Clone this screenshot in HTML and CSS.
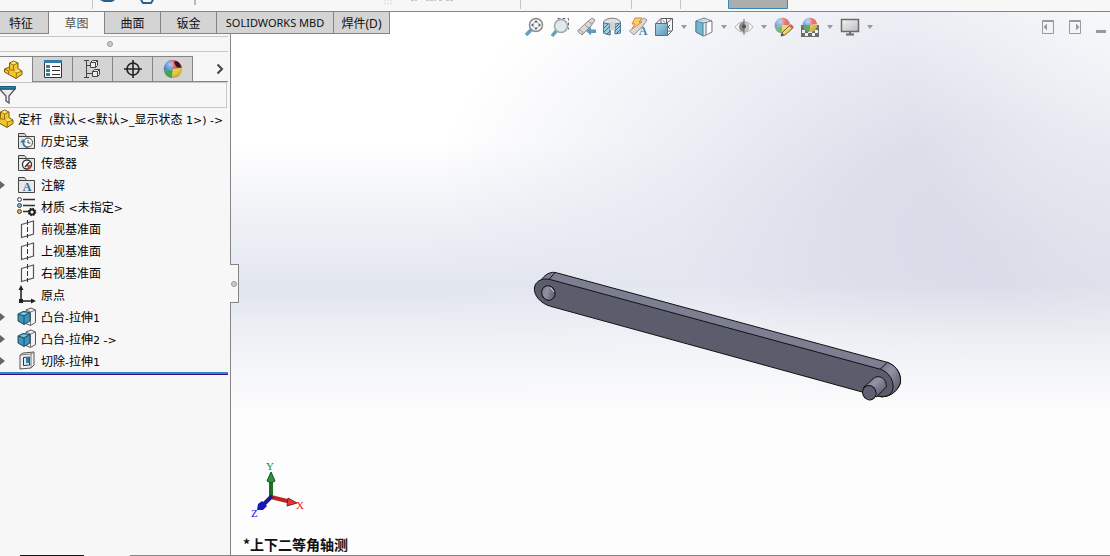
FILE: index.html
```html
<!DOCTYPE html>
<html lang="zh-CN">
<head>
  <meta charset="UTF-8" />
  <meta name="viewport" content="width=device-width, initial-scale=1" />
  <title>定杆 - SOLIDWORKS</title>
  <link rel="stylesheet" href="styles.css">
</head>
<body>
  <!-- shared icons -->
  <svg class="defs" width="0" height="0" aria-hidden="true">
    <defs>
      <linearGradient id="blue" x1="0" y1="0" x2="1" y2="1">
        <stop offset="0" stop-color="#9fd0e6" /><stop offset="1" stop-color="#3f86a8" />
      </linearGradient>
      <linearGradient id="steel" x1="0" y1="0" x2="1" y2="1">
        <stop offset="0" stop-color="#f4f4f4" /><stop offset="1" stop-color="#b4b4b4" />
      </linearGradient>
      <linearGradient id="rim" x1="0" y1="0" x2="1" y2="1">
        <stop offset="0" stop-color="#6b6d80" /><stop offset=".4" stop-color="#9092a6" /><stop offset="1" stop-color="#4c4e5c" />
      </linearGradient>
      <radialGradient id="shine" cx=".35" cy=".25" r=".8">
        <stop offset="0" stop-color="#fff" stop-opacity=".6" /><stop offset=".5" stop-color="#fff" stop-opacity="0" /><stop offset="1" stop-color="#000" stop-opacity=".25" />
      </radialGradient>
    </defs>
    <symbol id="i-part" viewBox="0 0 20 20">
      <path d="M1.500 9l5-2V3l4-2 4.500 2v5.500l4 2.500v3.500l-6 4L5 14l-3.500-2z" fill="#f3c42c" stroke="#7a5c0c" />
      <path d="M6.500 3l4 2 4.500-2M10.500 5v5l3 3 5.500-2M13.500 13l-.5 5M1.500 9l4 2v3M6.500 7v3l4 0" fill="none" stroke="#96700f" />
      <path d="M7.500 3l3-1.500 3 1.500-3 1.500zM11 11l3.500-1.500 3 1.500-3.500 1.500z" fill="#fbe27c" />
    </symbol>
    <symbol id="i-folder" viewBox="0 0 20 20">
      <path d="M1.500 17.500V2.500h6l2 3h8v12z" fill="#e9e9e9" stroke="#444" />
      <path d="M2 5.500h8" stroke="#444" />
      <path d="M2 4h5.500" stroke="#c4c4c4" />
    </symbol>
    <symbol id="i-plane" viewBox="0 0 20 20">
      <path d="M4.500 5.500L16.500 2v13L4.500 18.500z" fill="#fbfbfb" stroke="#555" stroke-width="1.200" />
      <path d="M10.500 1v18" stroke="#333" stroke-dasharray="5 2" />
    </symbol>
    <symbol id="i-boss" viewBox="0 0 20 20">
      <path d="M9 3l5-2 4.500 2v12.500l-5 3-4.500-2z" fill="#f2f2f2" stroke="#555" />
      <path d="M13.500 5v13M9 3l4.500 2 5-2" fill="none" stroke="#777" />
      <path d="M1 7l5-2.500 7 1V14l-6 3.500L1 14z" fill="#3f93b8" stroke="#1d4f68" />
      <path d="M1 7l6 2 6-3.500M7 9v8.500" fill="none" stroke="#1d4f68" />
      <path d="M3 7l3.500-1.500 4 .5L7 8z" fill="#8cc8e0" />
    </symbol>
    <symbol id="i-ball" viewBox="0 0 20 20">
      <path d="M10 10L9 1A9 9 0 0 0 1 12z" fill="#3d7fd0" />
      <path d="M10 10L9 1a9 9 0 0 1 10 8z" fill="#dc4040" />
      <path d="M10 10L1 12a9 9 0 0 0 8 7z" fill="#3fa548" />
      <path d="M10 10l9-1a9 9 0 0 1-10 10z" fill="#f0cc38" />
      <circle cx="10" cy="10" r="9" fill="url(#shine)" />
    </symbol>
  </svg>

  <header class="ribbon">
    <svg class="ribbon-art" width="800" height="10" viewBox="0 0 800 10" aria-hidden="true">
      <path d="M92.500 0v9M520.500 0v9M631.500 0v9M680.500 0v9" stroke="#c6c6c6" />
      <path d="M195 0v5" stroke="#bbb" stroke-width="2" />
      <path d="M100 0h15l-3 2h-8z" fill="#28618a" />
      <path d="M141 0l2 3h8l2-3" fill="none" stroke="#28618a" stroke-width="2" />
      <path d="M384 0h8M384 3.500h8" stroke="#e4e4e4" stroke-width="2" stroke-dasharray="2 1" />
      <path d="M411 0h6M426 0h10M439 0h4M446 0h7" stroke="#c4c4c4" stroke-width="2" stroke-dasharray="3 1" />
      <path d="M728.500-1v9.500h59V-1" fill="#adadad" stroke="#3a86b4" />
    </svg>
  </header>

  <main class="workspace">
    <nav class="tabs">
      <button type="button">特征</button>
      <button type="button" class="active">草图</button>
      <button type="button">曲面</button>
      <button type="button">钣金</button>
      <button type="button" class="wide">SOLIDWORKS MBD</button>
      <button type="button">焊件(D)</button>
    </nav>

    <aside class="sidebar">
      <div class="grip"><i class="dot"></i></div>
      <div class="panel-tabs">
        <button type="button" class="active" aria-label="特征树"><svg width="20" height="20"><use href="#i-part" /></svg></button>
        <button type="button" aria-label="属性">
          <svg width="20" height="20" viewBox="0 0 20 20">
            <path d="M1.500 1.500h17v17h-17z" fill="#fff" stroke="#333" />
            <path d="M1 1h18v3H1z" fill="#2f7ea6" />
            <path d="M3 6h4v3H3zM3 10h4v3H3zM3 14h4v3H3z" fill="#2f7ea6" />
            <path d="M9 7.500h8M9 11.500h8M9 15.500h8" stroke="#333" />
          </svg>
        </button>
        <button type="button" aria-label="配置">
          <svg width="20" height="20" viewBox="0 0 20 20" fill="#eee" stroke="#444">
            <path d="M3.500 1v18M1 1.500h5M1 18.500h5M4 6.500h4M4 14.500h6" fill="none" />
            <path d="M7.500 3.500l2-2h5v5l-2 2h-5zM9.500 12.500l2-2h5v5l-2 2h-5z" />
            <path d="M7.500 3.500h5v5M12.500 3.500l2-2M9.500 12.500h5v5M14.500 12.500l2-2" fill="none" />
          </svg>
        </button>
        <button type="button" aria-label="尺寸">
          <svg width="20" height="20" viewBox="0 0 20 20" fill="none" stroke="#222">
            <circle cx="10" cy="10" r="6" stroke-width="1.600" />
            <path d="M10 1v18M1 10h18" stroke-width="1.600" />
          </svg>
        </button>
        <button type="button" aria-label="外观">
          <svg width="20" height="20" viewBox="0 0 20 20">
            <use href="#i-ball" />
            <path d="M11 3c3-2 6 1 7 5-4 2-6-2-7-5z" fill="#2b1b1b" />
          </svg>
        </button>
        <button type="button" class="more" aria-label="更多">
          <svg width="8" height="12" viewBox="0 0 8 12"><path d="M1.500 1.500L6 6l-4.500 4.500" fill="none" stroke="#444" stroke-width="2" /></svg>
        </button>
      </div>
      <label class="filter">
        <svg width="18" height="20" viewBox="0 0 18 20">
          <path d="M0 4h15l-6 7v7l-3-2v-5L0 4.500z" fill="#eee" stroke="#555" stroke-width="1.300" />
          <path d="M0 1.500h15.500v2.500H0z" fill="#2582b0" stroke="#1c5878" />
        </svg>
        <input type="text" aria-label="过滤器" />
      </label>

      <ul class="tree">
        <li class="root">
          <svg width="14" height="20" viewBox="6 0 14 20"><use href="#i-part" width="20" height="20" /></svg>
          <span>定杆<b>  (</b>默认<b>&lt;&lt;</b>默认<b>&gt;_</b>显示状态<b> 1&gt;) -&gt;</b></span>
        </li>
        <li>
          <svg width="20" height="20" viewBox="0 0 20 20"><use href="#i-folder" />
            <circle cx="11" cy="11.500" r="4.500" fill="#fff" stroke="#444" />
            <path d="M11 9v3h2.500" fill="none" stroke="#444" />
            <path d="M11 16.500a5 5 0 0 1-5-5" fill="none" stroke="#2582b0" stroke-width="1.500" />
            <path d="M3 11.500h6L6 8z" fill="#2582b0" />
          </svg>
          <span>历史记录</span>
        </li>
        <li>
          <svg width="20" height="20" viewBox="0 0 20 20"><use href="#i-folder" />
            <circle cx="10" cy="11.500" r="4.500" fill="#fff" stroke="#333" stroke-width="1.300" />
            <path d="M10 12l4 0a4 4 0 0 1-3 4z" fill="#e0402c" />
            <path d="M8 14l4.500-5" stroke="#222" stroke-width="1.300" />
          </svg>
          <span>传感器</span>
        </li>
        <li class="branch">
          <svg width="20" height="20" viewBox="0 0 20 20"><use href="#i-folder" />
            <text x="10" y="16" class="note-a">A</text>
          </svg>
          <span>注解</span>
        </li>
        <li>
          <svg width="20" height="20" viewBox="0 0 20 20" stroke="#444">
            <path d="M6 2.500h12M6 8.500h12M6 14.500h6" stroke="#333" stroke-width="1.600" />
            <circle cx="2.500" cy="2.500" r="2" fill="#eee" />
            <circle cx="2.500" cy="8.500" r="2" fill="#68b8dc" />
            <circle cx="2.500" cy="14.500" r="2" fill="#f0b818" />
            <circle cx="15" cy="15" r="2.500" fill="none" stroke="#222" stroke-width="2" />
            <circle cx="15" cy="15" r="3.500" fill="none" stroke="#222" stroke-dasharray="1.500 1.250" stroke-width="1.500" />
          </svg>
          <span>材质<b> &lt;</b>未指定<b>&gt;</b></span>
        </li>
        <li><svg width="20" height="20"><use href="#i-plane" /></svg><span>前视基准面</span></li>
        <li><svg width="20" height="20"><use href="#i-plane" /></svg><span>上视基准面</span></li>
        <li><svg width="20" height="20"><use href="#i-plane" /></svg><span>右视基准面</span></li>
        <li>
          <svg width="20" height="20" viewBox="0 0 20 20" fill="#222">
            <path d="M4 3v13h12" fill="none" stroke="#222" stroke-width="1.600" />
            <path d="M1.500 5L4 0l2.500 5zM14 13.500l5 2.500-5 2.500zM2 14h4v4H2z" />
          </svg>
          <span>原点</span>
        </li>
        <li class="branch"><svg width="20" height="20"><use href="#i-boss" /></svg><span>凸台<b>-</b>拉伸<b>1</b></span></li>
        <li class="branch"><svg width="20" height="20"><use href="#i-boss" /></svg><span>凸台<b>-</b>拉伸<b>2 -&gt;</b></span></li>
        <li class="branch">
          <svg width="20" height="20" viewBox="0 0 20 20">
            <path d="M3 4l3-2 11-1v13l-3 3-11 1z" fill="#f0f0f0" stroke="#555" />
            <path d="M3 4l11-1v14M14 3l3-2" fill="none" stroke="#777" />
            <path d="M6.500 6.500l6-.5v8l-6 .5z" fill="#d8eef6" stroke="#333" />
            <path d="M9 6.500l3.500-.5v6H9z" fill="#2b7fa4" />
          </svg>
          <span>切除<b>-</b>拉伸<b>1</b></span>
        </li>
      </ul>
      <div class="rollback"></div>
      <div class="status"><i class="dark"></i><i class="gray"></i></div>
      <button type="button" class="splitter" aria-label="折叠面板"><i class="dot"></i></button>
    </aside>

    <section class="viewport">
      <div class="view-bar">
        <div class="view-tools">
          <button type="button" aria-label="整屏显示全图">
            <svg width="20" height="20" viewBox="0 0 20 20">
              <path d="M8 12l-6 6" stroke="#4b8fb0" stroke-width="3.500" />
              <circle cx="12" cy="8" r="6.500" fill="#f2f5f5" stroke="#777" stroke-width="1.500" />
              <path d="M12 3l2 2.500h-4zM12 13l2-2.500h-4zM7 8l2.500-2v4zM17 8l-2.500-2v4z" fill="#444" />
            </svg>
          </button>
          <button type="button" aria-label="局部放大">
            <svg width="20" height="20" viewBox="0 0 20 20">
              <path d="M7.500 1.500h11v11" fill="none" stroke="#555" stroke-dasharray="3 2" />
              <path d="M7 13l-5 6" stroke="#4b8fb0" stroke-width="3.500" />
              <circle cx="11" cy="9" r="6.500" fill="#dbe8ec" stroke="#999" stroke-width="1.500" />
            </svg>
          </button>
          <button type="button" aria-label="上一视图">
            <svg width="20" height="20" viewBox="0 0 20 20">
              <path d="M1.500 14L10 6l6-5 3 2-4 6-9 9z" fill="url(#steel)" stroke="#777" />
              <path d="M8 7l5 4M12 4l4 3M3 13c2 0 4 2 4 4" fill="none" stroke="#888" />
              <path d="M10 14l5-4v2.500h5v3.500h-5v2.500z" fill="#3f8cb2" />
            </svg>
          </button>
          <button type="button" aria-label="剖面视图">
            <svg width="20" height="20" viewBox="0 0 20 20">
              <path d="M1.500 5c2-5 15-5 17 0v10l-5 1V8H8v10l-6.500-2z" fill="#ddd" stroke="#666" />
              <path d="M1.500 6L8 7v11l-6.500-2zM13 7l5.500-1v10l-5.500 1z" fill="#8cc4da" stroke="#2f6480" />
              <path d="M2 11l4-4M2 15l6-6M5 17l3-3M13 11l4-4M13 14l5-5M14 17l4-4" stroke="#235871" />
              <path d="M8 7c0-3 5-3 5 0v6H8z" fill="#ccc" />
            </svg>
          </button>
          <button type="button" aria-label="动态注解视图">
            <svg width="20" height="20" viewBox="0 0 20 20">
              <path d="M1.500 14L10 6l6-5 3 2-4 6-9 9z" fill="url(#steel)" stroke="#888" />
              <path d="M7 1h7l-3 4h3L4 12l3-5H4z" fill="#ffc850" stroke="#d07020" />
              <text x="15" y="18" class="tool-a">A</text>
            </svg>
          </button>
          <button type="button" aria-label="视图定向">
            <svg width="20" height="20" viewBox="0 0 20 20">
              <path d="M2 6.500l5-5h11.500v12l-5 5M7 1.500v5M13 6l5-4.500M13 14h5M12.500 1v6" fill="none" stroke="#444" />
              <path d="M9 3.500l2 2M16 8l-2 2 2 2" fill="none" stroke="#444" />
              <path d="M1.500 6.500h12v12h-12z" fill="url(#blue)" stroke="#2f5f78" />
            </svg>
          </button>
          <button type="button" class="caret" aria-label="视图定向选项"></button>
          <button type="button" aria-label="显示样式">
            <svg width="20" height="20" viewBox="0 0 20 20">
              <path d="M2 4l8-3 8 3v11l-8 4-8-4z" fill="#dceaf0" stroke="#667" />
              <path d="M2 4l7 2v13l-7-4z" fill="#5ea9c8" stroke="#336a84" />
              <path d="M9 6l9-2M12 5v13" stroke="#667" /><path d="M13 6l4-1.500v10L13 17z" fill="#fff" />
              <path d="M3 4l7-2 4 1-6 2z" fill="#a9d6e8" />
            </svg>
          </button>
          <button type="button" class="caret" aria-label="显示样式选项"></button>
          <button type="button" aria-label="隐藏/显示项目">
            <svg width="20" height="20" viewBox="0 0 20 20">
              <path d="M1 10c5-7 13-7 18 0-5 7-13 7-18 0z" fill="#f5f5f5" stroke="#aaa" />
              <circle cx="10" cy="10" r="5" fill="#777" />
              <path d="M10 5a5 5 0 0 1 0 10z" fill="#bbb" />
              <path d="M10 2v16" stroke="#555" /><circle cx="10" cy="9.500" r="2" fill="#333" />
            </svg>
          </button>
          <button type="button" class="caret" aria-label="隐藏选项"></button>
          <button type="button" aria-label="编辑外观">
            <svg width="20" height="20" viewBox="0 0 20 20">
              <svg x="0" y="0" width="17" height="17"><use href="#i-ball" /></svg>
              <path d="M8 16l8-8 3 3-8 7-4 1z" fill="#f5cf52" stroke="#5a4a20" />
              <path d="M15 9l2-2 3 3-2 2z" fill="#c65050" /><path d="M7 19l1-3 2 2z" fill="#222" />
            </svg>
          </button>
          <button type="button" aria-label="应用布景">
            <svg width="20" height="20" viewBox="0 0 20 20">
              <path d="M1 8h18v12H1z" fill="#555" />
              <path d="M2 13h3v3H2zM15 13h3v3h-3zM5 16h3v3H5zM12 16h3v3h-3zM8 14h4v2H8z" fill="#eee" />
              <svg x="2" y="0" width="16" height="16"><use href="#i-ball" /></svg>
            </svg>
          </button>
          <button type="button" class="caret" aria-label="布景选项"></button>
          <button type="button" aria-label="视图设定">
            <svg width="20" height="20" viewBox="0 0 20 20">
              <path d="M1.500 2.500h17v12h-17z" fill="url(#steel)" stroke="#555" stroke-width="1.500" />
              <path d="M10 15v2M6 17.500h8" stroke="#555" stroke-width="2" />
            </svg>
          </button>
          <button type="button" class="caret" aria-label="视图设定选项"></button>
        </div>
        <div class="window-tools">
          <button type="button" aria-label="左窗格">
            <svg width="13" height="14" viewBox="0 0 13 14"><path d="M.5.5h11v13H.5zM.5 1.500h11" fill="none" stroke="#999" /><path d="M5 3.500v7L1.500 7z" fill="#999" /></svg>
          </button>
          <button type="button" aria-label="右窗格">
            <svg width="13" height="14" viewBox="0 0 13 14"><path d="M.5.5h11v13H.5zM.5 1.500h11" fill="none" stroke="#999" /><path d="M7 3.500v7L10.500 7z" fill="#999" /></svg>
          </button>
          <button type="button" aria-label="最小化">
            <svg width="10" height="14" viewBox="0 0 10 14"><path d="M0 10h10v3H0z" fill="#999" /></svg>
          </button>
        </div>
      </div>

      <!-- the rod -->
      <svg class="model" width="400" height="150" viewBox="0 0 1200 450" stroke="#111" stroke-width="3" stroke-linejoin="round">
        <path d="M62 62C74 44 92 32 112 39L1102 307C1132 318 1145 345 1141 370C1132 392 1115 408 1085 411L62 90z" fill="#7c7e92" />
        <path d="M1080 328L1102 307C1132 318 1145 345 1141 370C1132 392 1118 404 1095 410z" fill="url(#rim)" />
        <path d="M88 57l17-19" />
        <path d="M92 59L1082 328C1110 338 1122 365 1119 386C1114 408 1095 413 1070 408L92 139C60 130 42 106 43 84C47 60 70 53 92 59z" fill="#5b5d6c" />
        <ellipse cx="85" cy="99" rx="20" ry="22" transform="rotate(-25 85 99)" fill="url(#rim)" />
        <path d="M92 82l10 14" stroke="#ddd" stroke-width="3" />
        <path d="M1031 382l32-29c18-10 38 6 36 28l-30 30z" fill="url(#rim)" />
        <ellipse cx="1048" cy="398" rx="20" ry="22" transform="rotate(-25 1048 398)" fill="#5f6172" />
      </svg>

      <div class="view-info">
        <svg class="triad" width="60" height="62" viewBox="0 0 60 62">
          <path d="M21 39V22" stroke="#1b6e26" stroke-width="4" />
          <path d="M17 23l4-9 4 9-4 2z" fill="#2c9440" stroke="#12501c" />
          <path d="M21 39l20 5" stroke="#c02020" stroke-width="4" />
          <path d="M38 40l9 5-10 3z" fill="#e03838" stroke="#901818" />
          <path d="M22 38l-9 9" stroke="#1c1c8c" stroke-width="4" />
          <path d="M12 43l5 5-4 4-6 0 1-6z" fill="#1818b8" />
          <text x="16" y="12" fill="#0a8a10">Y</text>
          <text x="46" y="51" fill="#f02020">X</text>
          <text x="1" y="59" fill="#1010e8">Z</text>
        </svg>
        <p class="view-name">*上下二等角轴测</p>
      </div>
    </section>
  </main>
</body>
</html>
```
FILE: styles.css
```css
* {
  box-sizing: border-box;
}
body {
  margin: 0;
  min-height: 100vh;
  display: flex;
  flex-direction: column;
  font-family: "Noto Sans", "Noto Sans CJK SC", sans-serif;
  font-size: 12px;
  color: #111;
  background: #f7f7f7;
}
button {
  margin: 0;
  padding: 0;
  border: none;
  background: none;
  font: inherit;
  color: inherit;
  display: flex;
  align-items: center;
  justify-content: center;
}
svg {
  display: block;
  flex: none;
}
.defs {
  position: absolute;
}
.ribbon {
  height: 12px;
  overflow: hidden;
  border-bottom: 1px solid #858886;
}

/* tabs overlap the top left of the viewport */
.workspace {
  flex: 1;
  display: grid;
  grid-template-columns: 231px 1fr;
  grid-template-rows: 22px 1fr;
}
.tabs {
  grid-area: 1 / 1 / 2 / 3;
  justify-self: start;
  z-index: 1;
  display: flex;
}
.tabs button {
  width: 56px;
  background: #d4d4d4;
  border-right: 1px solid #858585;
  border-bottom: 1px solid #858585;
  white-space: nowrap;
}
.tabs button:first-child {
  width: 49px;
  padding-right: 6px;
}
.tabs .active {
  background: #f7f7f7;
  border-bottom: none;
  color: #555;
}
.tabs .wide {
  width: 117px;
  font-size: 11px;
}

.sidebar {
  grid-area: 2 / 1;
  position: relative;
  z-index: 1;
  display: flex;
  flex-direction: column;
  background: #f7f7f7;
  border-right: 1px solid #858585;
}
.dot {
  width: 6px;
  height: 6px;
  border: 1px solid #999;
  border-radius: 50%;
  background: #ccc;
}
.grip {
  height: 16px;
  margin: 2px 2px 4px 0;
  padding-right: 8px;
  border-top: 1px solid #c8c8c8;
  border-bottom: 1px solid #c8c8c8;
  display: flex;
  align-items: center;
  justify-content: center;
}
.panel-tabs {
  display: flex;
  height: 26px;
  margin-right: 2px;
}
.panel-tabs button {
  width: 40px;
  background: #d4d4d4;
  border: 1px solid #858585;
  border-left: none;
}
.panel-tabs .active {
  width: 33px;
  padding-right: 6px;
  background: #f7f7f7;
  border-bottom: none;
}
.panel-tabs .more {
  flex: 1;
  padding-left: 18px;
  background: none;
  border-top: none;
  border-right: none;
}
.filter {
  display: flex;
  align-items: center;
  height: 26px;
  margin-right: 3px;
  border: 1px solid #c8c8c8;
  border-left: none;
}
.filter input {
  flex: 1;
  min-width: 0;
  border: none;
  background: none;
  outline: none;
  font: inherit;
}

.tree {
  list-style: none;
  margin: 0;
  padding: 0;
}
.tree li {
  height: 22px;
  padding-left: 17px;
  display: flex;
  align-items: center;
  gap: 4px;
  color: #000;
  white-space: pre;
  line-height: 20px;
}
.tree span {
  padding-top: 2px;
}
.tree .root {
  padding-left: 0;
}
.tree b {
  font: 11px "DejaVu Sans", sans-serif;
}
.tree .branch {
  padding-left: 0;
}
.tree .branch::before {
  content: "";
  width: 0;
  margin-right: 8px;
  border: 4px solid transparent;
  border-left: 5px solid #666;
  border-right: none;
}
.note-a,
.tool-a {
  font: bold 12px "Liberation Serif", serif;
  text-anchor: middle;
  fill: #2a7196;
  stroke: none;
}
.rollback {
  height: 3px;
  margin-right: 2px;
  background: #3388c4;
  border-bottom: 1px solid #2a1496;
}
.status {
  display: flex;
  gap: 46px;
  margin-top: auto;
  padding-left: 20px;
}
.status i {
  height: 1px;
}
.status .dark {
  width: 64px;
  background: #111;
}
.status .gray {
  flex: 1;
  background: #858585;
}
.splitter {
  position: absolute;
  top: 230px;
  right: -9px;
  width: 9px;
  height: 39px;
  background: #f7f7f7;
  border: 1px solid #858585;
  border-left: none;
}
.splitter .dot {
  flex: none;
}

.viewport {
  grid-area: 1 / 2 / 3 / 3;
  position: relative;
  overflow: hidden;
  display: flex;
  flex-direction: column;
  justify-content: space-between;
  border-bottom: 1px solid #858585;
  background:
    linear-gradient(to bottom, rgba(253, 253, 253, 0) 50%, rgba(253, 253, 253, .5) 60%, #fdfdfd 74%),
    radial-gradient(ellipse 24% 60% at 100% 0%, rgba(255, 255, 255, .6), rgba(255, 255, 255, 0)),
    radial-gradient(ellipse 68% 72% at 90% 42%, #d8dbe7 0%, #dcdfea 30%, rgba(228, 231, 240, .75) 58%, rgba(255, 255, 255, 0) 100%),
    linear-gradient(to bottom, #fff 24%, #e0e4ee 52%);
}
.view-bar {
  display: flex;
  align-items: center;
  height: 30px;
  padding: 0 4px 0 290px;
}
.view-tools {
  display: flex;
}
.view-tools button {
  width: 26px;
  height: 20px;
}
.view-tools svg {
  overflow: visible;
  opacity: .85;
}
.view-tools .caret {
  width: 14px;
}
.caret::before {
  content: "";
  border: 3px solid transparent;
  border-top: 4px solid #999;
  border-bottom: none;
}
.window-tools {
  display: flex;
  gap: 14px;
  margin-left: auto;
}
.model {
  position: absolute;
  left: 289px;
  top: 248px;
}
.view-info {
  padding-left: 12px;
}
.triad {
  margin-left: 7px;
  font: 11px "Liberation Serif", serif;
}
.view-name {
  margin: 14px 0 0;
  padding-bottom: 1px;
  font: bold 14px/20px "Noto Sans CJK SC", sans-serif;
}
```
